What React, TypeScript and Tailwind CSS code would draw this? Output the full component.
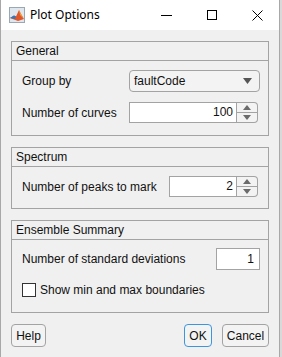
import * as React from 'react';

const font = { fontFamily: '"Liberation Sans", Arial, sans-serif' };

function MatlabIcon() {
  return (
    <svg width="16" height="16" viewBox="0 0 16 16">
      <rect x="0.5" y="0.5" width="15" height="15" fill="#dfe6ee" stroke="#9aa7b4" />
      <path d="M1 11 L5 8.5 L7 9.5 L10 3 L12 7 L15 12 L9 14 Z" fill="#e0572b" />
      <path d="M1 11 L5 8.5 L7 9.5 L6 12 Z" fill="#3577b8" />
      <path d="M10 3 L12 7 L15 12 L11 8 Z" fill="#f2a13a" />
    </svg>
  );
}

function Panel({ title, height, children }: { title: string; height: number; children: React.ReactNode }) {
  return (
    <div className="flex flex-col border border-[#a3a3a3]" style={{ height }}>
      <div className="h-[19px] shrink-0 border-b border-[#a3a3a3] pl-[4px] text-[12px] leading-[19px] text-[#111]">
        {title}
      </div>
      <div className="flex flex-1 flex-col pl-[10px]">{children}</div>
    </div>
  );
}

function Spinner({ value, width }: { value: string; width: number }) {
  return (
    <div className="flex h-[21px]">
      <div
        className="h-full border border-[#a3a3a3] bg-white pr-[3px] text-right text-[12px] leading-[19px] text-[#111]"
        style={{ width }}
      >
        {value}
      </div>
      <div className="flex h-full w-[21px] flex-col rounded-r-[4px] border border-l-0 border-[#a3a3a3] bg-[#f3f3f3]">
        <div className="flex flex-1 items-center justify-center border-b border-[#a3a3a3]">
          <svg width="8" height="5" viewBox="0 0 8 5">
            <path d="M0 5 L4 0 L8 5 Z" fill="#6b6b6b" />
          </svg>
        </div>
        <div className="flex flex-1 items-center justify-center">
          <svg width="8" height="5" viewBox="0 0 8 5">
            <path d="M0 0 L8 0 L4 5 Z" fill="#6b6b6b" />
          </svg>
        </div>
      </div>
    </div>
  );
}

function Button({ label, width, primary }: { label: string; width: number; primary?: boolean }) {
  return (
    <div
      className={
        'flex h-[23px] items-center justify-center rounded-[4px] border bg-[#f3f3f3] text-[12px] text-[#111] ' +
        (primary ? 'border-[#3d95de]' : 'border-[#a3a3a3]')
      }
      style={{ width }}
    >
      {label}
    </div>
  );
}

export default function App() {
  return (
    <div className="h-[357px] w-[282px] bg-[#d9d9d9]" style={font}>
      <div className="flex h-full w-[280px] flex-col border-x border-[#a8a8a8] bg-[#f0f0f0]">
        {/* Title bar */}
        <div className="flex h-[30px] shrink-0 items-center bg-white">
          <div className="ml-[8px]">
            <MatlabIcon />
          </div>
          <span className="ml-[5px] text-[12px] text-black" style={{ fontFamily: '"Noto Sans", "Liberation Sans", sans-serif' }}>
            Plot Options
          </span>
          <div className="ml-auto flex items-center">
            <div className="mr-[35px] h-px w-[11px] bg-black" />
            <div className="mr-[35px] h-[10px] w-[10px] border border-black" />
            <svg width="11" height="11" viewBox="0 0 11 11" className="mr-[16px]">
              <path d="M0.5 0.5 L10.5 10.5 M10.5 0.5 L0.5 10.5" stroke="#000" strokeWidth="1" />
            </svg>
          </div>
        </div>

        {/* Body */}
        <div className="flex flex-1 flex-col px-[10px] pt-[11px]">
          <Panel title="General" height={95}>
            <div className="mt-[9px] flex h-[22px] items-center">
              <span className="w-[107px] text-[12px] text-[#111]">Group by</span>
              <div className="flex h-[22px] w-[131px] items-center justify-between rounded-[4px] border border-[#a3a3a3] bg-[#f3f3f3] pl-[4px] pr-[7px] text-[12px] text-[#111]">
                <span>faultCode</span>
                <svg width="9" height="6" viewBox="0 0 9 6">
                  <path d="M0 0 L9 0 L4.5 6 Z" fill="#555" />
                </svg>
              </div>
            </div>
            <div className="mt-[10px] flex items-center">
              <span className="w-[107px] text-[12px] text-[#111]">Number of curves</span>
              <Spinner value="100" width={108} />
            </div>
          </Panel>

          <div className="mt-[11px]">
            <Panel title="Spectrum" height={62}>
              <div className="mt-[9px] flex items-center">
                <span className="w-[147px] text-[12px] text-[#111]">Number of peaks to mark</span>
                <Spinner value="2" width={68} />
              </div>
            </Panel>
          </div>

          <div className="mt-[11px]">
            <Panel title="Ensemble Summary" height={93}>
              <div className="mt-[8px] flex items-center">
                <span className="w-[194px] text-[12px] text-[#111]">Number of standard deviations</span>
                <div className="h-[22px] w-[44px] border border-[#a3a3a3] bg-white pr-[5px] text-right text-[12px] leading-[20px] text-[#111]">
                  1
                </div>
              </div>
              <div className="mt-[13px] flex h-[14px] items-center">
                <div className="h-[14px] w-[14px] border border-[#333] bg-white" />
                <span className="ml-[4px] text-[12px] text-[#111]">Show min and max boundaries</span>
              </div>
            </Panel>
          </div>

          <div className="mt-[11px] flex items-center">
            <Button label="Help" width={35} />
            <div className="ml-auto flex gap-[10px]">
              <Button label="OK" width={28} primary />
              <Button label="Cancel" width={47} />
            </div>
          </div>
        </div>
      </div>
    </div>
  );
}
